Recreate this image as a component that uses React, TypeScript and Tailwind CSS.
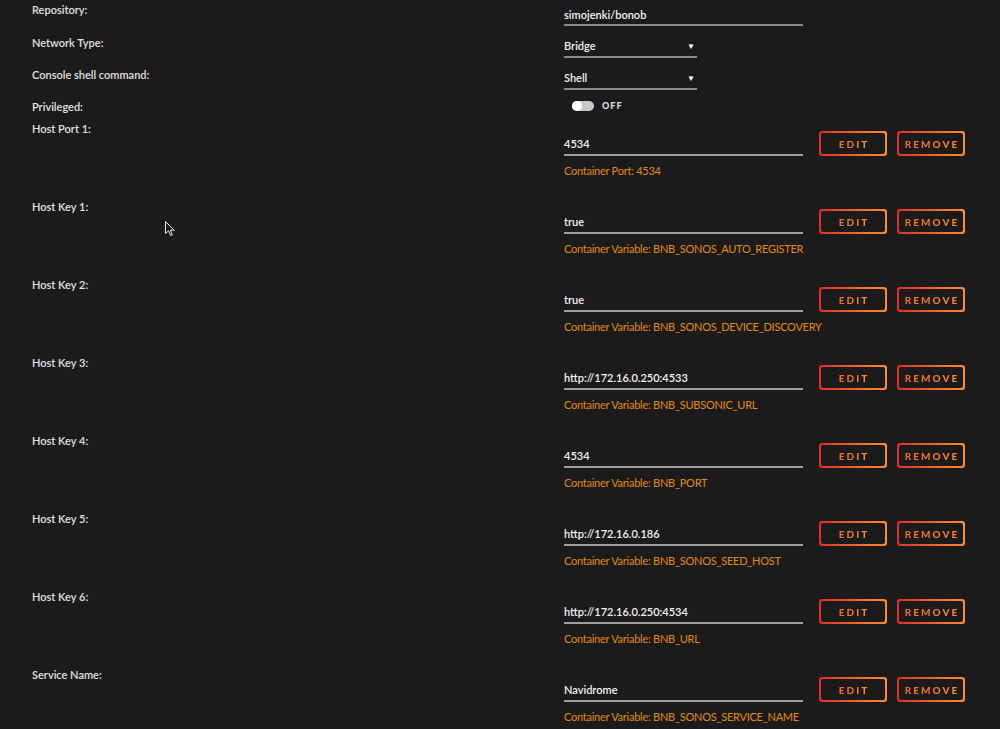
import React from 'react';

const font = { fontFamily: 'Lato, "Open Sans", "Liberation Sans", sans-serif' };

interface HostRow {
  label: string;
  value: string;
  hint: string;
}

const hostRows: HostRow[] = [
  { label: 'Host Port 1:', value: '4534', hint: 'Container Port: 4534' },
  { label: 'Host Key 1:', value: 'true', hint: 'Container Variable: BNB_SONOS_AUTO_REGISTER' },
  { label: 'Host Key 2:', value: 'true', hint: 'Container Variable: BNB_SONOS_DEVICE_DISCOVERY' },
  { label: 'Host Key 3:', value: 'http://172.16.0.250:4533', hint: 'Container Variable: BNB_SUBSONIC_URL' },
  { label: 'Host Key 4:', value: '4534', hint: 'Container Variable: BNB_PORT' },
  { label: 'Host Key 5:', value: 'http://172.16.0.186', hint: 'Container Variable: BNB_SONOS_SEED_HOST' },
  { label: 'Host Key 6:', value: 'http://172.16.0.250:4534', hint: 'Container Variable: BNB_URL' },
  { label: 'Service Name:', value: 'Navidrome', hint: 'Container Variable: BNB_SONOS_SERVICE_NAME' },
];

function Label({ children }: { children: React.ReactNode }) {
  return (
    <div className="w-[532px] shrink-0 text-[11px] leading-[14px] font-semibold text-[#e0e0e0]">
      {children}
    </div>
  );
}

function GradButton({ children }: { children: React.ReactNode }) {
  return (
    <div className="w-[68px] h-[25px] rounded-[3px] p-[2px] bg-gradient-to-r from-[#e22828] to-[#ff8c2f]">
      <div className="w-full h-full rounded-[2px] bg-[#1c1b1b] flex items-center justify-center">
        <span className="text-[10px] leading-[12px] font-black tracking-[2px] pl-[2px] bg-gradient-to-r from-[#e8662a] to-[#ff8c2f] bg-clip-text text-transparent">
          {children}
        </span>
      </div>
    </div>
  );
}

function Select({ value }: { value: string }) {
  return (
    <div className="w-[133px] h-[26px] pt-[7px] border-b-2 border-[#8a8a8a] flex items-start justify-between">
      <span className="block text-[11px] leading-[14px] font-semibold text-[#f2f2f2]">{value}</span>
      <span className="block text-[8px] leading-[14px] text-white pr-[2px]">▼</span>
    </div>
  );
}

export default function App() {
  return (
    <div className="relative w-[1000px] h-[729px] overflow-hidden bg-[#1c1b1b] pl-[32px]" style={font}>
      {/* Repository */}
      <div className="flex h-[32px]">
        <div className="pt-[3px]">
          <Label>Repository:</Label>
        </div>
        <div className="w-[239px] h-[26px] pt-[8px] pb-[2px] border-b-2 border-[#8a8a8a] text-[11px] leading-[14px] font-semibold text-[#f2f2f2]">
          simojenki/bonob
        </div>
      </div>

      {/* Network Type */}
      <div className="flex h-[32px]">
        <div className="pt-[4px]">
          <Label>Network Type:</Label>
        </div>
        <Select value="Bridge" />
      </div>

      {/* Console */}
      <div className="flex h-[32px]">
        <div className="pt-[4px]">
          <Label>Console shell command:</Label>
        </div>
        <Select value="Shell" />
      </div>

      {/* Privileged */}
      <div className="flex h-[26px]">
        <div className="pt-[4px]">
          <Label>Privileged:</Label>
        </div>
        <div className="flex items-center pl-[8px] h-[20px] gap-[8px]">
          <div className="w-[22px] h-[10px] rounded-[5px] bg-[#c9c9c9] flex items-center">
            <div className="w-[10px] h-[10px] rounded-full bg-white" />
          </div>
          <span className="text-[9px] font-black tracking-[1px] text-[#dcdcdc]">OFF</span>
        </div>
      </div>

      {hostRows.map((row) => (
        <div key={row.label} className="flex h-[78px]">
          <Label>{row.label}</Label>
          <div className="pt-[9px]">
            <div className="flex items-end">
              <div className="w-[239px] h-[25px] flex items-end pb-[3px] border-b-2 border-[#a0a0a0] text-[11px] leading-[14px] font-semibold text-[#f2f2f2]">
                {row.value}
              </div>
              <div className="ml-[16px] flex gap-[10px]">
                <GradButton>EDIT</GradButton>
                <GradButton>REMOVE</GradButton>
              </div>
            </div>
            <div className="mt-[8px] text-[11px] leading-[14px] tracking-[-0.25px] text-[#e08a10]">{row.hint}</div>
          </div>
        </div>
      ))}

      {/* mouse pointer */}
      <svg className="absolute left-[165px] top-[221px]" width="10" height="16" viewBox="0 0 10 16">
        <path d="M0.5 0.5 L0.5 12.5 L3.5 9.8 L5.6 14.6 L7.4 13.8 L5.4 9.2 L9.2 9.2 Z" fill="#1c1b1b" stroke="#e8e8e8" strokeWidth="1" />
      </svg>
    </div>
  );
}
